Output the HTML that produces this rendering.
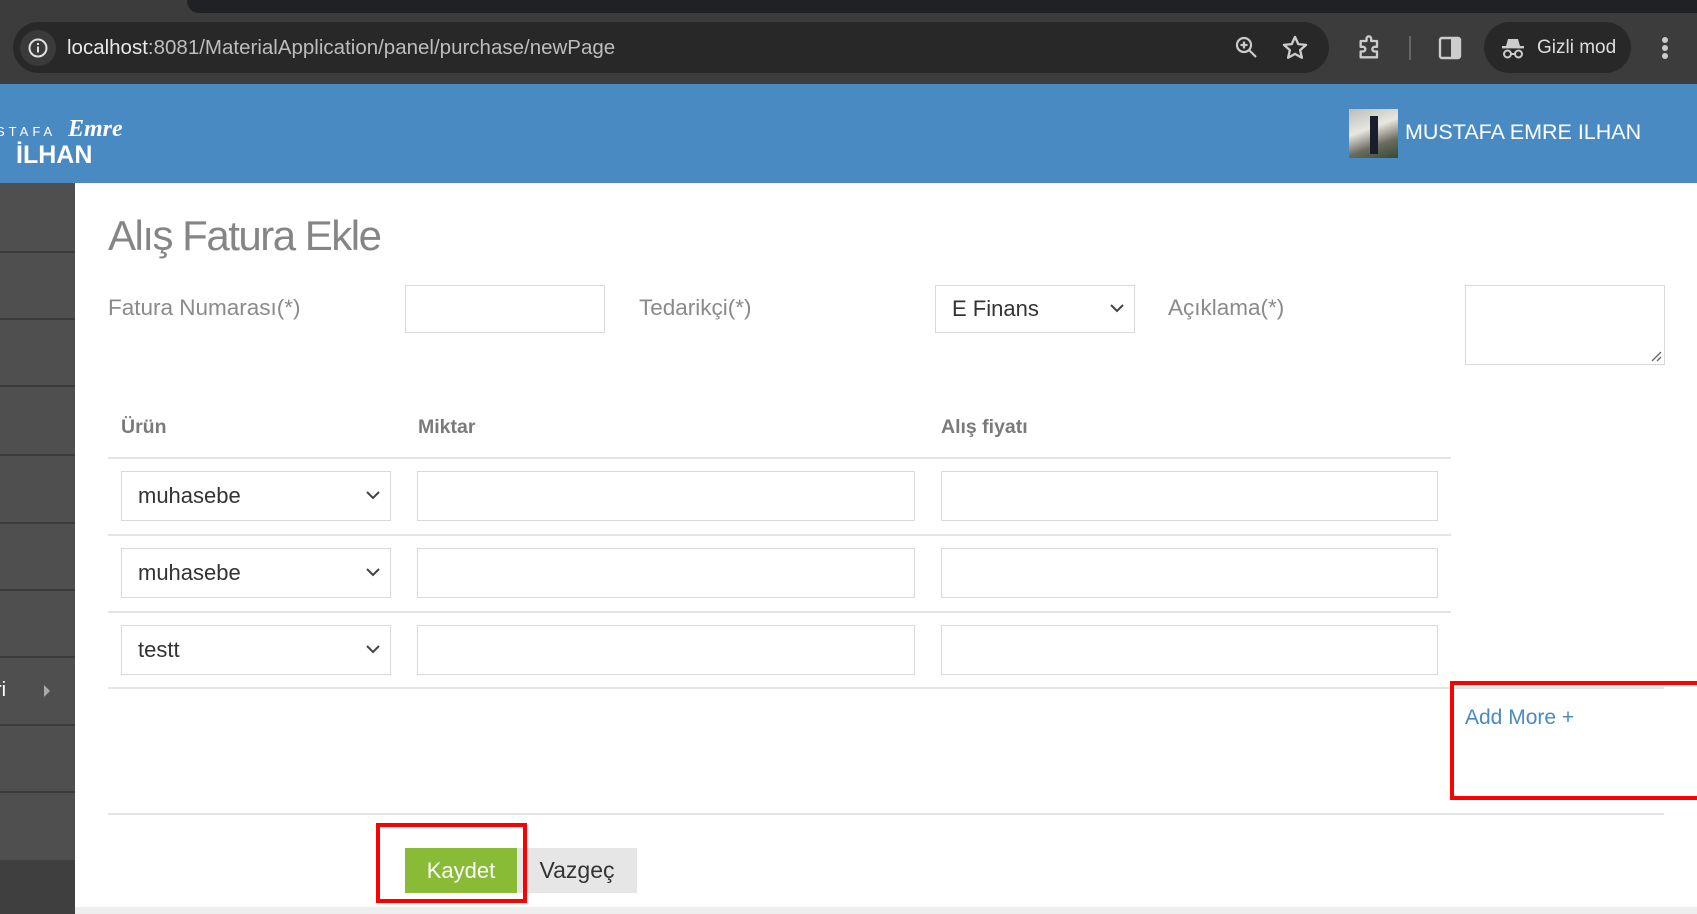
<!DOCTYPE html>
<html><head><meta charset="utf-8"><style>
*{box-sizing:border-box;margin:0;padding:0}
body{width:1697px;height:914px;position:relative;overflow:hidden;background:#fff;font-family:"Liberation Sans",Arial,sans-serif}
.a{position:absolute}
.inp{position:absolute;border:1px solid #d9d9d9;background:#fff}
.lbl{position:absolute;color:#8a8a8a;font-size:22.5px}
.sel{position:absolute;border:1px solid #d9d9d9;background:#fff;font-size:22px;color:#333;padding-left:16px;display:flex;align-items:center}
.chev{position:absolute;right:10px;top:50%;margin-top:-5px}
.th{position:absolute;font-weight:bold;color:#7a7a7a;font-size:19.5px}
.hl{position:absolute;height:2px;background:#e4e4e4}
.sb{position:absolute;left:0;width:75px;height:2px;background:#3a3a3a}
</style></head><body>
<div class="a" style="left:0;top:0;width:1697px;height:84px;background:#3c3c3c"></div>
<div class="a" style="left:187px;top:0;width:1510px;height:13px;background:#202124;border-bottom-left-radius:12px"></div>
<div class="a" style="left:13px;top:22px;width:1316px;height:51px;background:#282828;border-radius:26px"></div>
<div class="a" style="left:20px;top:30px;width:36px;height:36px;border-radius:50%;background:#3a3a3a"></div>
<svg class="a" style="left:27px;top:37px" width="22" height="22" viewBox="0 0 22 22"><circle cx="11" cy="11" r="8.5" fill="none" stroke="#e0e0e0" stroke-width="2"/><rect x="10" y="9.5" width="2" height="6" fill="#e0e0e0"/><rect x="10" y="6" width="2" height="2" fill="#e0e0e0"/></svg>
<div class="a" style="left:67px;top:36px;font-size:20.5px;color:#e8e8e8">localhost<span style="color:#bdbdbd">:8081/MaterialApplication/panel/purchase/newPage</span></div>
<svg class="a" style="left:1234px;top:35px" width="26" height="26" viewBox="0 0 26 26"><circle cx="10" cy="10" r="7" fill="none" stroke="#ccc" stroke-width="2.2"/><path d="M15 15l7 7M10 6.5v7M6.5 10h7" stroke="#ccc" stroke-width="2.2"/></svg>
<svg class="a" style="left:1281px;top:34px" width="28" height="28" viewBox="0 0 24 24"><path d="M12 2.5l2.8 6.2 6.7.6-5.1 4.5 1.5 6.6L12 17l-5.9 3.4 1.5-6.6-5.1-4.5 6.7-.6z" fill="none" stroke="#ccc" stroke-width="2" stroke-linejoin="round"/></svg>
<svg class="a" style="left:1356px;top:34px" width="28" height="28" viewBox="0 0 24 24"><path d="M4 6h5V4a2 2 0 014 0v2h5v5h-2a2 2 0 000 4h2v5H4v-5h2a2 2 0 000-4H4z" fill="none" stroke="#ccc" stroke-width="2" stroke-linejoin="round"/></svg>
<div class="a" style="left:1409px;top:36px;width:2px;height:24px;background:#666"></div>
<svg class="a" style="left:1438px;top:36px" width="24" height="24" viewBox="0 0 24 24"><rect x="2" y="2" width="20" height="20" rx="2" fill="none" stroke="#ccc" stroke-width="2.4"/><rect x="13" y="3" width="8" height="18" fill="#ccc"/></svg>
<div class="a" style="left:1484px;top:22px;width:147px;height:51px;background:#282828;border-radius:26px"></div>
<svg class="a" style="left:1500px;top:35px" width="26" height="26" viewBox="0 0 26 26"><path d="M6 11l2-7h10l2 7z" fill="#ccc"/><rect x="2" y="11" width="22" height="2.4" fill="#ccc"/><circle cx="7.5" cy="19" r="3.5" fill="none" stroke="#ccc" stroke-width="2"/><circle cx="18.5" cy="19" r="3.5" fill="none" stroke="#ccc" stroke-width="2"/><path d="M11 19h4" stroke="#ccc" stroke-width="2"/></svg>
<div class="a" style="left:1537px;top:37px;font-size:19px;color:#ddd">Gizli mod</div>
<div class="a" style="left:1662px;top:37px;width:6px;height:6px;border-radius:50%;background:#ccc"></div>
<div class="a" style="left:1662px;top:45px;width:6px;height:6px;border-radius:50%;background:#ccc"></div>
<div class="a" style="left:1662px;top:53px;width:6px;height:6px;border-radius:50%;background:#ccc"></div>
<div class="a" style="left:0;top:84px;width:1697px;height:99px;background:#4a8ac2"></div>
<div class="a" style="left:-4px;top:124px;font-size:13px;color:#fff;letter-spacing:4px">STAFA</div>
<div class="a" style="left:68px;top:116px;font-size:24px;color:#fff;font-style:italic;font-weight:bold;font-family:'Liberation Serif',serif">Emre</div>
<div class="a" style="left:16px;top:141px;font-size:25px;color:#fff;font-weight:bold">İLHAN</div>
<div class="a" style="left:1349px;top:109px;width:49px;height:49px;background:linear-gradient(160deg,#bbb 0%,#e8e8e0 40%,#6b6b60 70%,#334a30 100%)"></div>
<div class="a" style="left:1370px;top:116px;width:8px;height:38px;background:#1a1e2a"></div>
<div class="a" style="left:1405px;top:120px;font-size:21.5px;color:#fff">MUSTAFA EMRE ILHAN</div>
<div class="a" style="left:0;top:183px;width:75px;height:677px;background:#4f4f4f"></div>
<div class="a" style="left:0;top:860px;width:75px;height:54px;background:#3f3f3f"></div>
<div class="sb" style="top:251px"></div><div class="sb" style="top:318px"></div><div class="sb" style="top:385px"></div><div class="sb" style="top:454px"></div><div class="sb" style="top:522px"></div><div class="sb" style="top:589px"></div><div class="sb" style="top:656px"></div><div class="sb" style="top:724px"></div><div class="sb" style="top:791px"></div>
<div class="a" style="left:-5px;top:679px;font-size:20px;color:#fff">ri</div>
<div class="a" style="left:44px;top:685px;width:0;height:0;border-top:6px solid transparent;border-bottom:6px solid transparent;border-left:6px solid #aaa"></div>
<div class="a" style="left:75px;top:907px;width:1622px;height:7px;background:#eee"></div>
<div class="a" style="left:108px;top:212px;font-size:42px;color:#858585;letter-spacing:-1.5px">Alış Fatura Ekle</div>
<div class="lbl" style="left:108px;top:295px">Fatura Numarası(*)</div>
<div class="inp" style="left:405px;top:285px;width:200px;height:48px"></div>
<div class="lbl" style="left:639px;top:295px">Tedarikçi(*)</div>
<div class="sel" style="left:935px;top:285px;width:200px;height:48px">E Finans<svg class="chev" width="14" height="9" viewBox="0 0 14 9"><path d="M1 1l6 6 6-6" fill="none" stroke="#444" stroke-width="2"/></svg></div>
<div class="lbl" style="left:1168px;top:295px">Açıklama(*)</div>
<div class="inp" style="left:1465px;top:285px;width:200px;height:80px"></div>
<svg class="a" style="left:1650px;top:350px" width="12" height="12" viewBox="0 0 12 12"><path d="M2 11L11 2M7 11l4-4" stroke="#666" stroke-width="1.3"/></svg>
<div class="th" style="left:121px;top:416px">Ürün</div>
<div class="th" style="left:418px;top:416px">Miktar</div>
<div class="th" style="left:941px;top:416px">Alış fiyatı</div>
<div class="hl" style="left:108px;top:457px;width:1343px"></div>
<div class="sel" style="left:121px;top:471px;width:270px;height:50px">muhasebe<svg class="chev" width="14" height="9" viewBox="0 0 14 9"><path d="M1 1l6 6 6-6" fill="none" stroke="#444" stroke-width="2"/></svg></div>
<div class="inp" style="left:417px;top:471px;width:498px;height:50px"></div>
<div class="inp" style="left:941px;top:471px;width:497px;height:50px"></div>
<div class="hl" style="left:108px;top:534px;width:1343px"></div>
<div class="sel" style="left:121px;top:548px;width:270px;height:50px">muhasebe<svg class="chev" width="14" height="9" viewBox="0 0 14 9"><path d="M1 1l6 6 6-6" fill="none" stroke="#444" stroke-width="2"/></svg></div>
<div class="inp" style="left:417px;top:548px;width:498px;height:50px"></div>
<div class="inp" style="left:941px;top:548px;width:497px;height:50px"></div>
<div class="hl" style="left:108px;top:611px;width:1343px"></div>
<div class="sel" style="left:121px;top:625px;width:270px;height:50px">testt<svg class="chev" width="14" height="9" viewBox="0 0 14 9"><path d="M1 1l6 6 6-6" fill="none" stroke="#444" stroke-width="2"/></svg></div>
<div class="inp" style="left:417px;top:625px;width:498px;height:50px"></div>
<div class="inp" style="left:941px;top:625px;width:497px;height:50px"></div>
<div class="hl" style="left:108px;top:687px;width:1556px"></div>
<div class="a" style="left:1465px;top:706px;font-size:21px;color:#4a8ac2">Add More +</div>
<div class="a" style="left:1450px;top:681px;width:252px;height:119px;border:4px solid #f00"></div>
<div class="hl" style="left:108px;top:813px;width:1556px"></div>
<div class="a" style="left:517px;top:848px;width:120px;height:45px;background:#e6e6e6;color:#333;font-size:23px;display:flex;align-items:center;justify-content:center">Vazgeç</div>
<div class="a" style="left:376px;top:823px;width:151px;height:80px;border:4px solid #f00"></div>
<div class="a" style="left:405px;top:848px;width:112px;height:45px;background:#8abb36;color:#fff;font-size:22px;display:flex;align-items:center;justify-content:center">Kaydet</div>
</body></html>
